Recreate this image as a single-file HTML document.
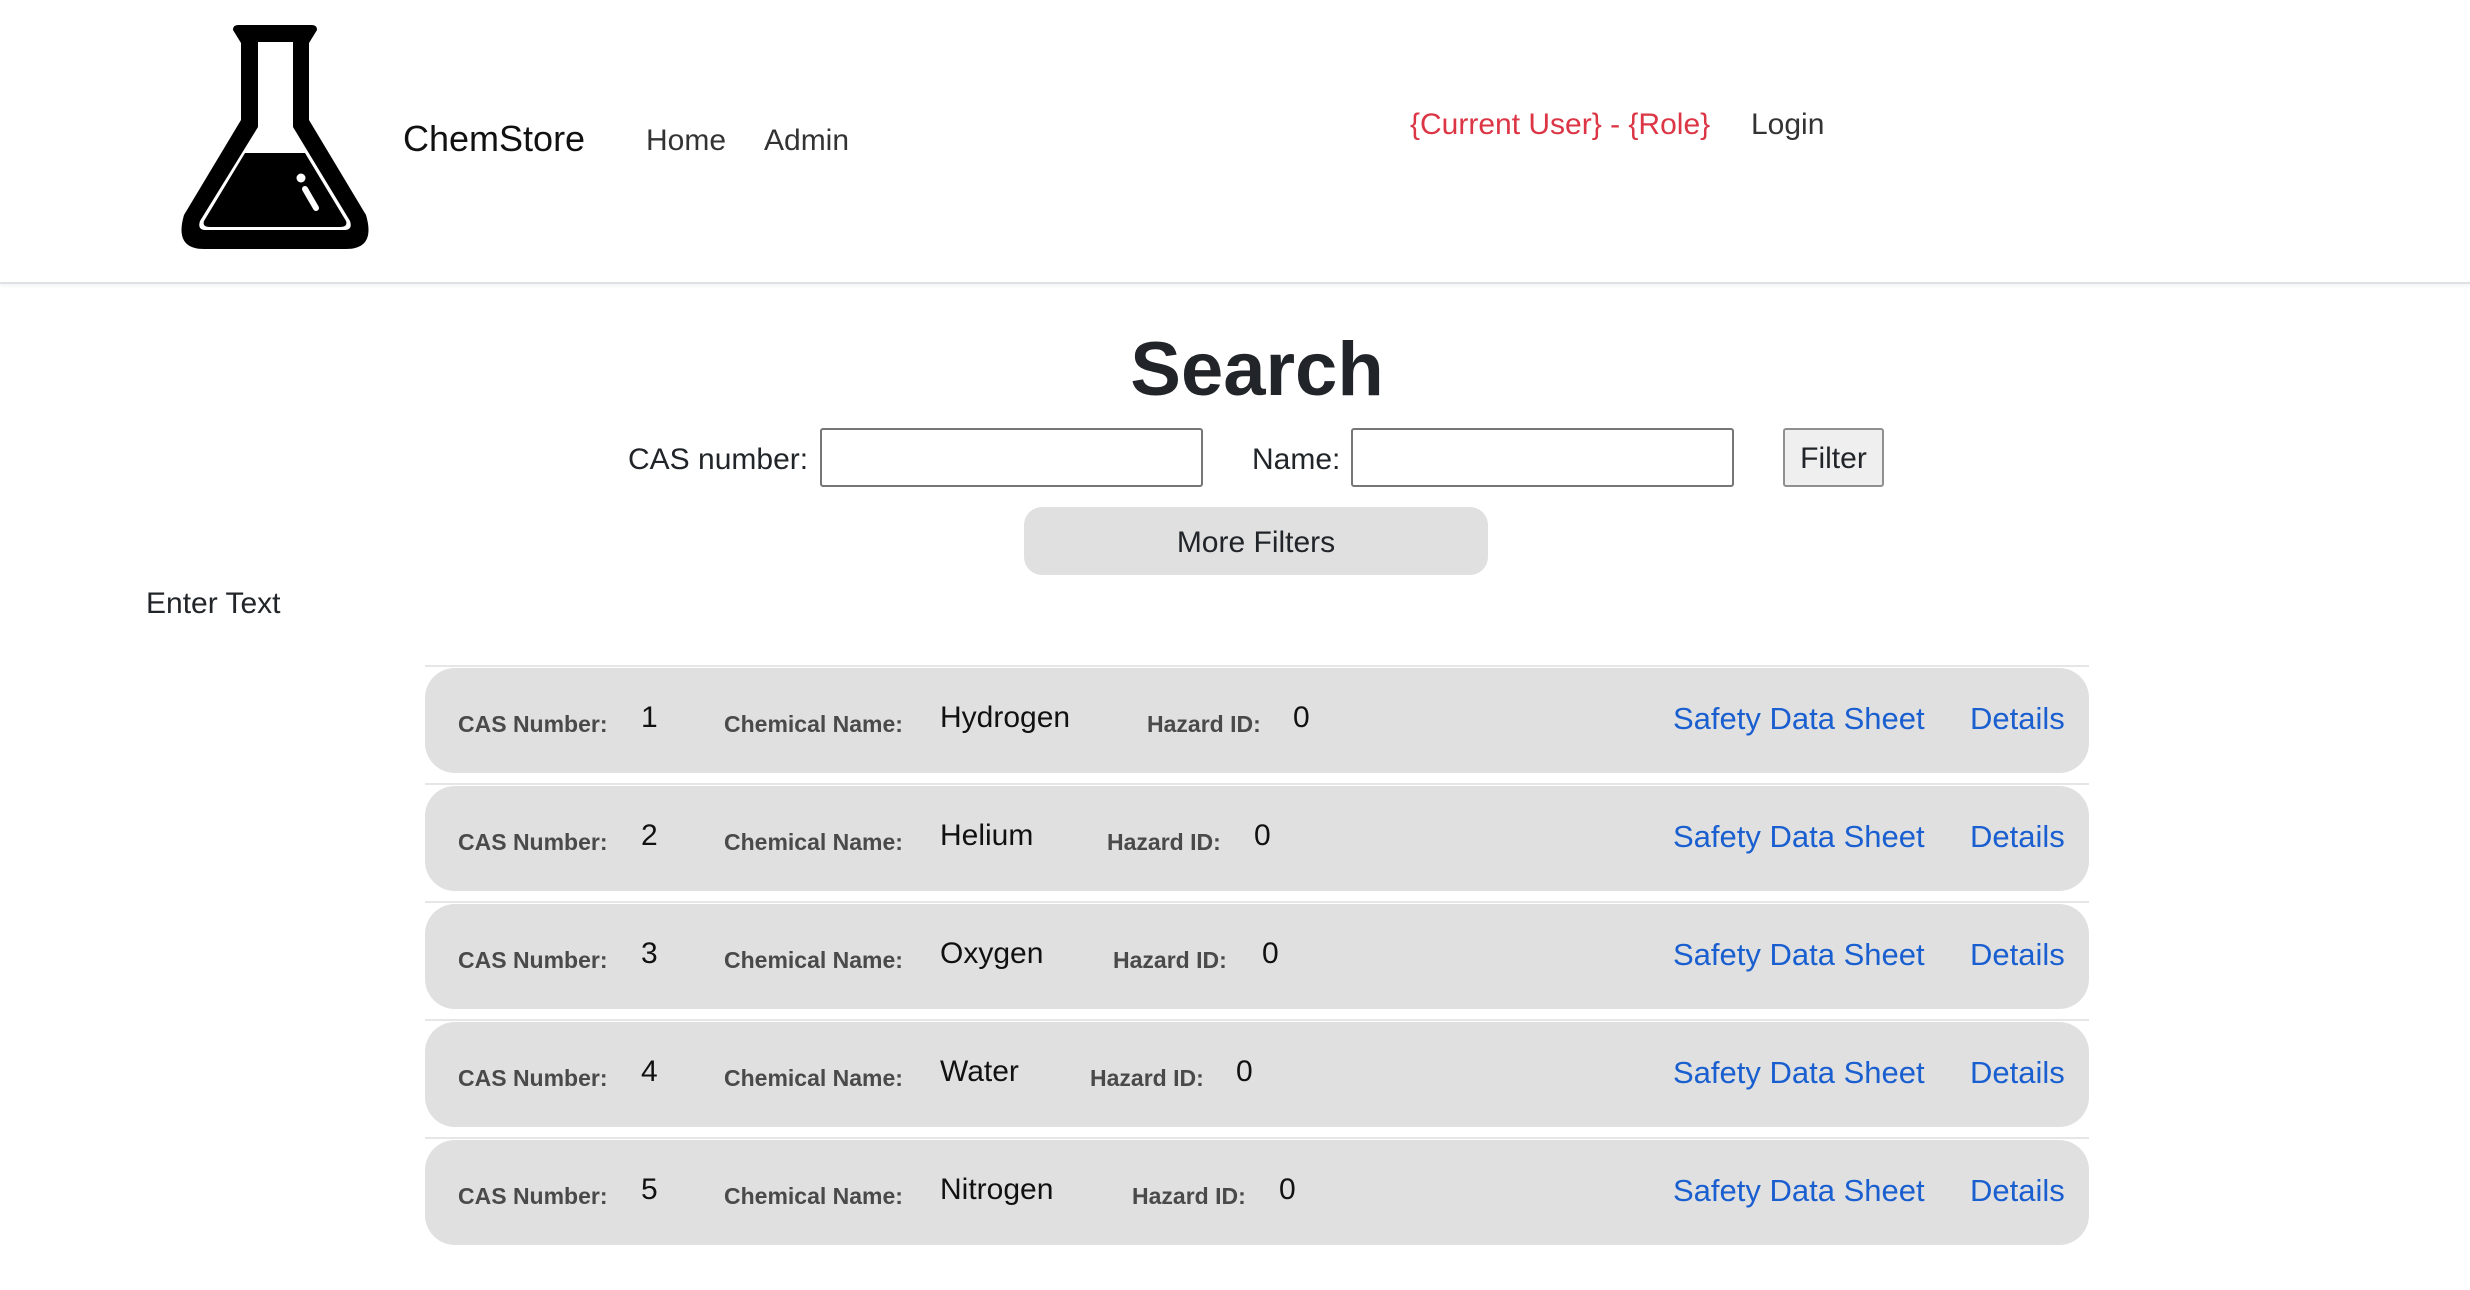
<!DOCTYPE html>
<html><head><meta charset="utf-8"><style>
body{margin:0;width:2470px;height:1290px;background:#fff;font-family:"Liberation Sans",sans-serif;position:relative;overflow:hidden;color:#212529}
.a{position:absolute;white-space:nowrap}
header{position:absolute;left:0;top:0;width:2470px;height:282px;border-bottom:2px solid #dee2e6;box-shadow:0 2px 4px rgba(0,0,0,0.05)}
.inp{position:absolute;border:2px solid #767676;border-radius:3px;background:#fff;box-sizing:border-box}
.row{position:absolute;left:425px;width:1664px;height:105px;background:#e0e0e0;border-radius:30px}
.hr{position:absolute;left:425px;width:1664px;height:2px;background:#e6e6e6}
.lb{position:absolute;font-weight:bold;font-size:23px;color:#4a4a4a;top:43px}
.v{position:absolute;font-size:30px;color:#111;top:33px}
.lk{position:absolute;font-size:31px;color:#1a5fd0;top:33px}
</style></head><body>
<header>
<svg class="a" style="left:178px;top:25px" width="194" height="225" viewBox="0 0 194 225">
<path d="M55,5 Q55,0 60,0 H134 Q139,0 139,5 L131,18 V95 L188,190 Q198,224 168,224 H26 Q-4,224 6,190 L63,95 V18 Z" fill="#000"/>
<path d="M80,17 H115 V102 L172,196 Q175,205 166,205 H28 Q19,205 22,196 L80,102 Z" fill="#fff"/>
<path d="M67,128 H127 L168,196 Q170,202 162,202 H32 Q24,202 26,196 Z" fill="#000"/>
<circle cx="123" cy="153" r="4.5" fill="#fff"/>
<line x1="127" y1="164" x2="138" y2="183" stroke="#fff" stroke-width="6" stroke-linecap="round"/>
</svg>
<div class="a" style="left:403px;top:118px;font-size:36px;color:#111">ChemStore</div>
<div class="a" style="left:646px;top:124px;font-size:30px;color:#333">Home</div>
<div class="a" style="left:764px;top:124px;font-size:30px;color:#333">Admin</div>
<div class="a" style="left:1410px;top:108px;font-size:30px;color:#dc3545">{Current User} - {Role}</div>
<div class="a" style="left:1751px;top:108px;font-size:30px;color:#333">Login</div>
</header>
<div class="a" style="left:0;width:2514px;text-align:center;top:326px;font-size:76px;font-weight:bold;color:#212529">Search</div>
<div class="a" style="left:628px;top:443px;font-size:30px">CAS number:</div>
<div class="inp" style="left:820px;top:428px;width:383px;height:59px"></div>
<div class="a" style="left:1252px;top:443px;font-size:30px">Name:</div>
<div class="inp" style="left:1351px;top:428px;width:383px;height:59px"></div>
<div class="a" style="left:1783px;top:428px;width:101px;height:59px;box-sizing:border-box;border:2px solid #8f8f8f;border-radius:3px;background:#efefef;font-size:30px;text-align:center;line-height:57px">Filter</div>
<div class="a" style="left:1024px;top:507px;width:464px;height:68px;background:#e0e0e0;border-radius:18px;font-size:30px;text-align:center;line-height:72px">More Filters</div>
<div class="a" style="left:146px;top:587px;font-size:30px">Enter Text</div>

<div class="hr" style="top:665px"></div>
<div class="row" style="top:668px"><div class="lb" style="left:33px">CAS Number:</div><div class="v" style="left:216px">1</div><div class="lb" style="left:299px">Chemical Name:</div><div class="v" style="left:515px">Hydrogen</div><div class="lb" style="left:722px">Hazard ID:</div><div class="v" style="left:868px">0</div><div class="lk" style="left:1248px">Safety Data Sheet</div><div class="lk" style="left:1545px">Details</div></div>
<div class="hr" style="top:783px"></div>
<div class="row" style="top:786px"><div class="lb" style="left:33px">CAS Number:</div><div class="v" style="left:216px">2</div><div class="lb" style="left:299px">Chemical Name:</div><div class="v" style="left:515px">Helium</div><div class="lb" style="left:682px">Hazard ID:</div><div class="v" style="left:829px">0</div><div class="lk" style="left:1248px">Safety Data Sheet</div><div class="lk" style="left:1545px">Details</div></div>
<div class="hr" style="top:901px"></div>
<div class="row" style="top:904px"><div class="lb" style="left:33px">CAS Number:</div><div class="v" style="left:216px">3</div><div class="lb" style="left:299px">Chemical Name:</div><div class="v" style="left:515px">Oxygen</div><div class="lb" style="left:688px">Hazard ID:</div><div class="v" style="left:837px">0</div><div class="lk" style="left:1248px">Safety Data Sheet</div><div class="lk" style="left:1545px">Details</div></div>
<div class="hr" style="top:1019px"></div>
<div class="row" style="top:1022px"><div class="lb" style="left:33px">CAS Number:</div><div class="v" style="left:216px">4</div><div class="lb" style="left:299px">Chemical Name:</div><div class="v" style="left:515px">Water</div><div class="lb" style="left:665px">Hazard ID:</div><div class="v" style="left:811px">0</div><div class="lk" style="left:1248px">Safety Data Sheet</div><div class="lk" style="left:1545px">Details</div></div>
<div class="hr" style="top:1137px"></div>
<div class="row" style="top:1140px"><div class="lb" style="left:33px">CAS Number:</div><div class="v" style="left:216px">5</div><div class="lb" style="left:299px">Chemical Name:</div><div class="v" style="left:515px">Nitrogen</div><div class="lb" style="left:707px">Hazard ID:</div><div class="v" style="left:854px">0</div><div class="lk" style="left:1248px">Safety Data Sheet</div><div class="lk" style="left:1545px">Details</div></div>
</body></html>
